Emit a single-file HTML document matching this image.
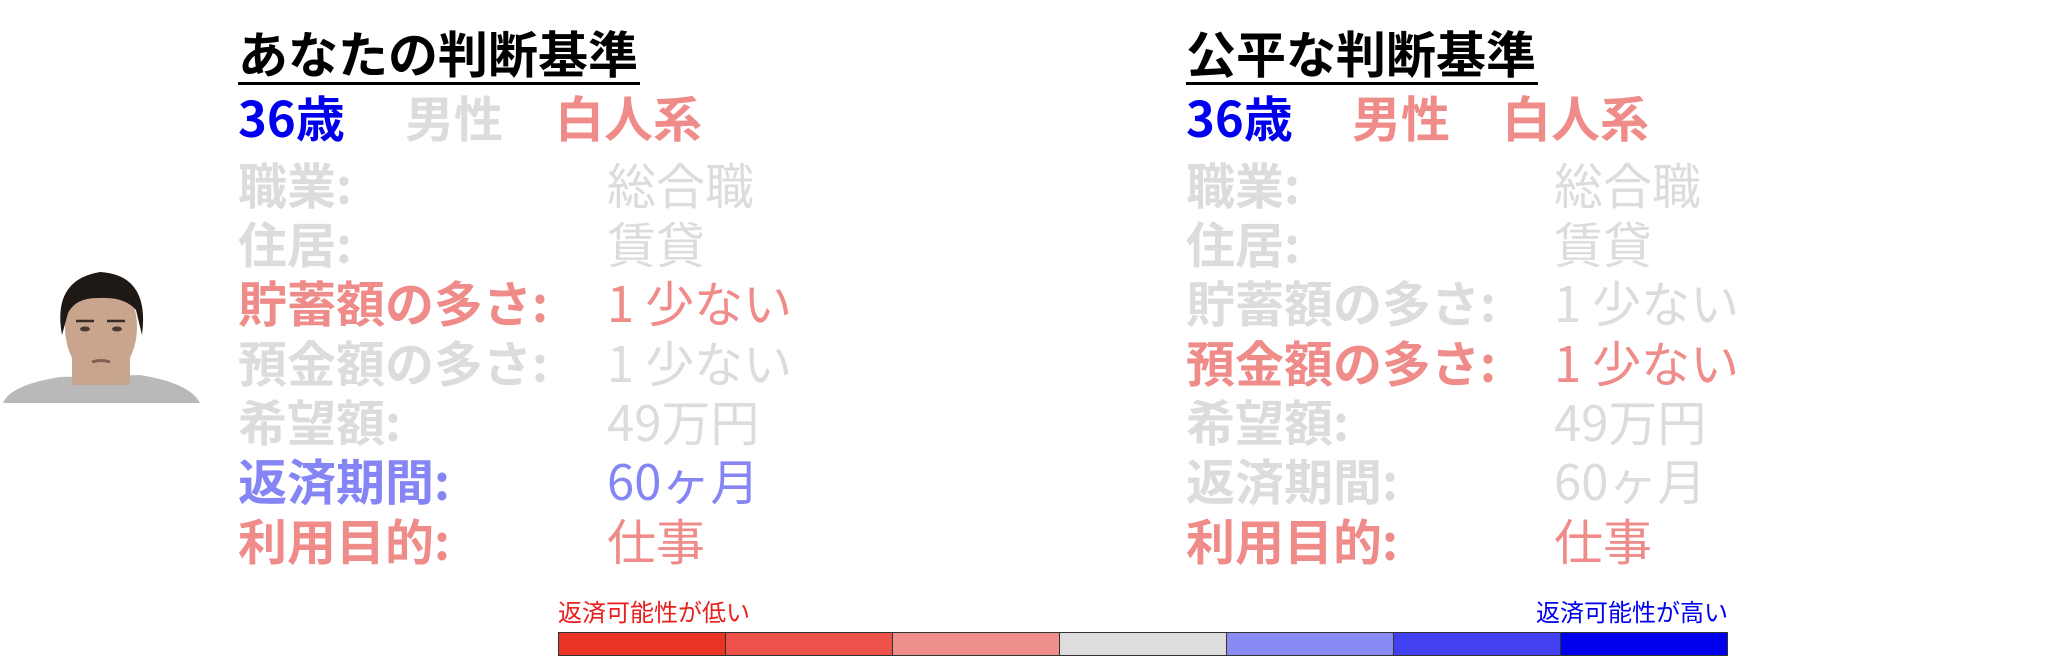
<!DOCTYPE html>
<html><head><meta charset="utf-8"><style>
body{margin:0;width:2048px;height:665px;background:#fff;position:relative;overflow:hidden;font-family:"Noto Sans CJK JP","Liberation Sans",sans-serif}
.t{position:absolute;white-space:nowrap;line-height:60px;font-size:49px}
.b{font-weight:bold}
.h{font-size:50px;font-weight:bold;color:#000;line-height:60px;border-bottom:3px solid #000;padding-right:2px}
.g{color:#dcdcdc}.r{color:#ef8c8a}.lb{color:#8585f5}.bl{color:#0000ee}
.v{font-weight:normal}
.bar{position:absolute;top:632px;height:24px;border:1px solid #333;box-sizing:border-box}
.lbl{position:absolute;top:596px;font-size:24px;line-height:30px;white-space:nowrap}
</style></head><body>
<svg style="position:absolute;left:0;top:265px" width="205" height="145" viewBox="0 0 205 145">
<path d="M3 138 Q10 120 60 112 L140 110 Q190 118 200 138 Z" fill="#b9b9b9"/>
<rect x="72" y="80" width="58" height="40" fill="#c7a48e"/>
<ellipse cx="101" cy="62" rx="36" ry="52" fill="#c9a58d"/>
<path d="M62 70 Q52 15 100 7 Q150 10 142 70 L136 45 Q125 32 100 33 Q76 32 68 48 Z" fill="#1e1915"/>
<ellipse cx="85" cy="64" rx="5" ry="2.5" fill="#4a3a30"/><ellipse cx="117" cy="64" rx="5" ry="2.5" fill="#4a3a30"/>
<path d="M76 56 L94 56 M107 56 L125 56" stroke="#3a2c24" stroke-width="2.5"/>
<path d="M92 97 Q101 94 110 97" stroke="#8a5d52" stroke-width="3" fill="none"/>
</svg>
<div class="t h" style="left:238px;top:22px">あなたの判断基準</div>
<div class="t b bl" style="left:238px;top:87px">36歳</div>
<div class="t b g" style="left:405px;top:87px">男性</div>
<div class="t b r" style="left:555px;top:87px">白人系</div>
<div class="t b g" style="left:238px;top:154px">職業:</div><div class="t v g" style="left:607px;top:154px">総合職</div>
<div class="t b g" style="left:238px;top:213px">住居:</div><div class="t v g" style="left:607px;top:213px">賃貸</div>
<div class="t b r" style="left:238px;top:272px">貯蓄額の多さ:</div><div class="t v r" style="left:607px;top:272px">1 少ない</div>
<div class="t b g" style="left:238px;top:332px">預金額の多さ:</div><div class="t v g" style="left:607px;top:332px">1 少ない</div>
<div class="t b g" style="left:238px;top:391px">希望額:</div><div class="t v g" style="left:607px;top:391px">49万円</div>
<div class="t b lb" style="left:238px;top:450px">返済期間:</div><div class="t v lb" style="left:607px;top:450px">60ヶ月</div>
<div class="t b r" style="left:238px;top:510px">利用目的:</div><div class="t v r" style="left:607px;top:510px">仕事</div>

<div class="t h" style="left:1186px;top:22px">公平な判断基準</div>
<div class="t b bl" style="left:1186px;top:87px">36歳</div>
<div class="t b r" style="left:1352px;top:87px">男性</div>
<div class="t b r" style="left:1502px;top:87px">白人系</div>
<div class="t b g" style="left:1186px;top:154px">職業:</div><div class="t v g" style="left:1554px;top:154px">総合職</div>
<div class="t b g" style="left:1186px;top:213px">住居:</div><div class="t v g" style="left:1554px;top:213px">賃貸</div>
<div class="t b g" style="left:1186px;top:272px">貯蓄額の多さ:</div><div class="t v g" style="left:1554px;top:272px">1 少ない</div>
<div class="t b r" style="left:1186px;top:332px">預金額の多さ:</div><div class="t v r" style="left:1554px;top:332px">1 少ない</div>
<div class="t b g" style="left:1186px;top:391px">希望額:</div><div class="t v g" style="left:1554px;top:391px">49万円</div>
<div class="t b g" style="left:1186px;top:450px">返済期間:</div><div class="t v g" style="left:1554px;top:450px">60ヶ月</div>
<div class="t b r" style="left:1186px;top:510px">利用目的:</div><div class="t v r" style="left:1554px;top:510px">仕事</div>

<div class="lbl" style="left:558px;color:#e82020">返済可能性が低い</div>
<div class="lbl" style="right:320px;color:#0000ee">返済可能性が高い</div>
<div class="bar" style="left:558px;width:168px;background:#e93323"></div>
<div class="bar" style="left:725px;width:168px;background:#ec5249"></div>
<div class="bar" style="left:892px;width:168px;background:#ef8f8a"></div>
<div class="bar" style="left:1059px;width:168px;background:#dddddd"></div>
<div class="bar" style="left:1226px;width:168px;background:#8a8af5"></div>
<div class="bar" style="left:1393px;width:168px;background:#4141f2"></div>
<div class="bar" style="left:1560px;width:168px;background:#0000ee"></div>
</body></html>
